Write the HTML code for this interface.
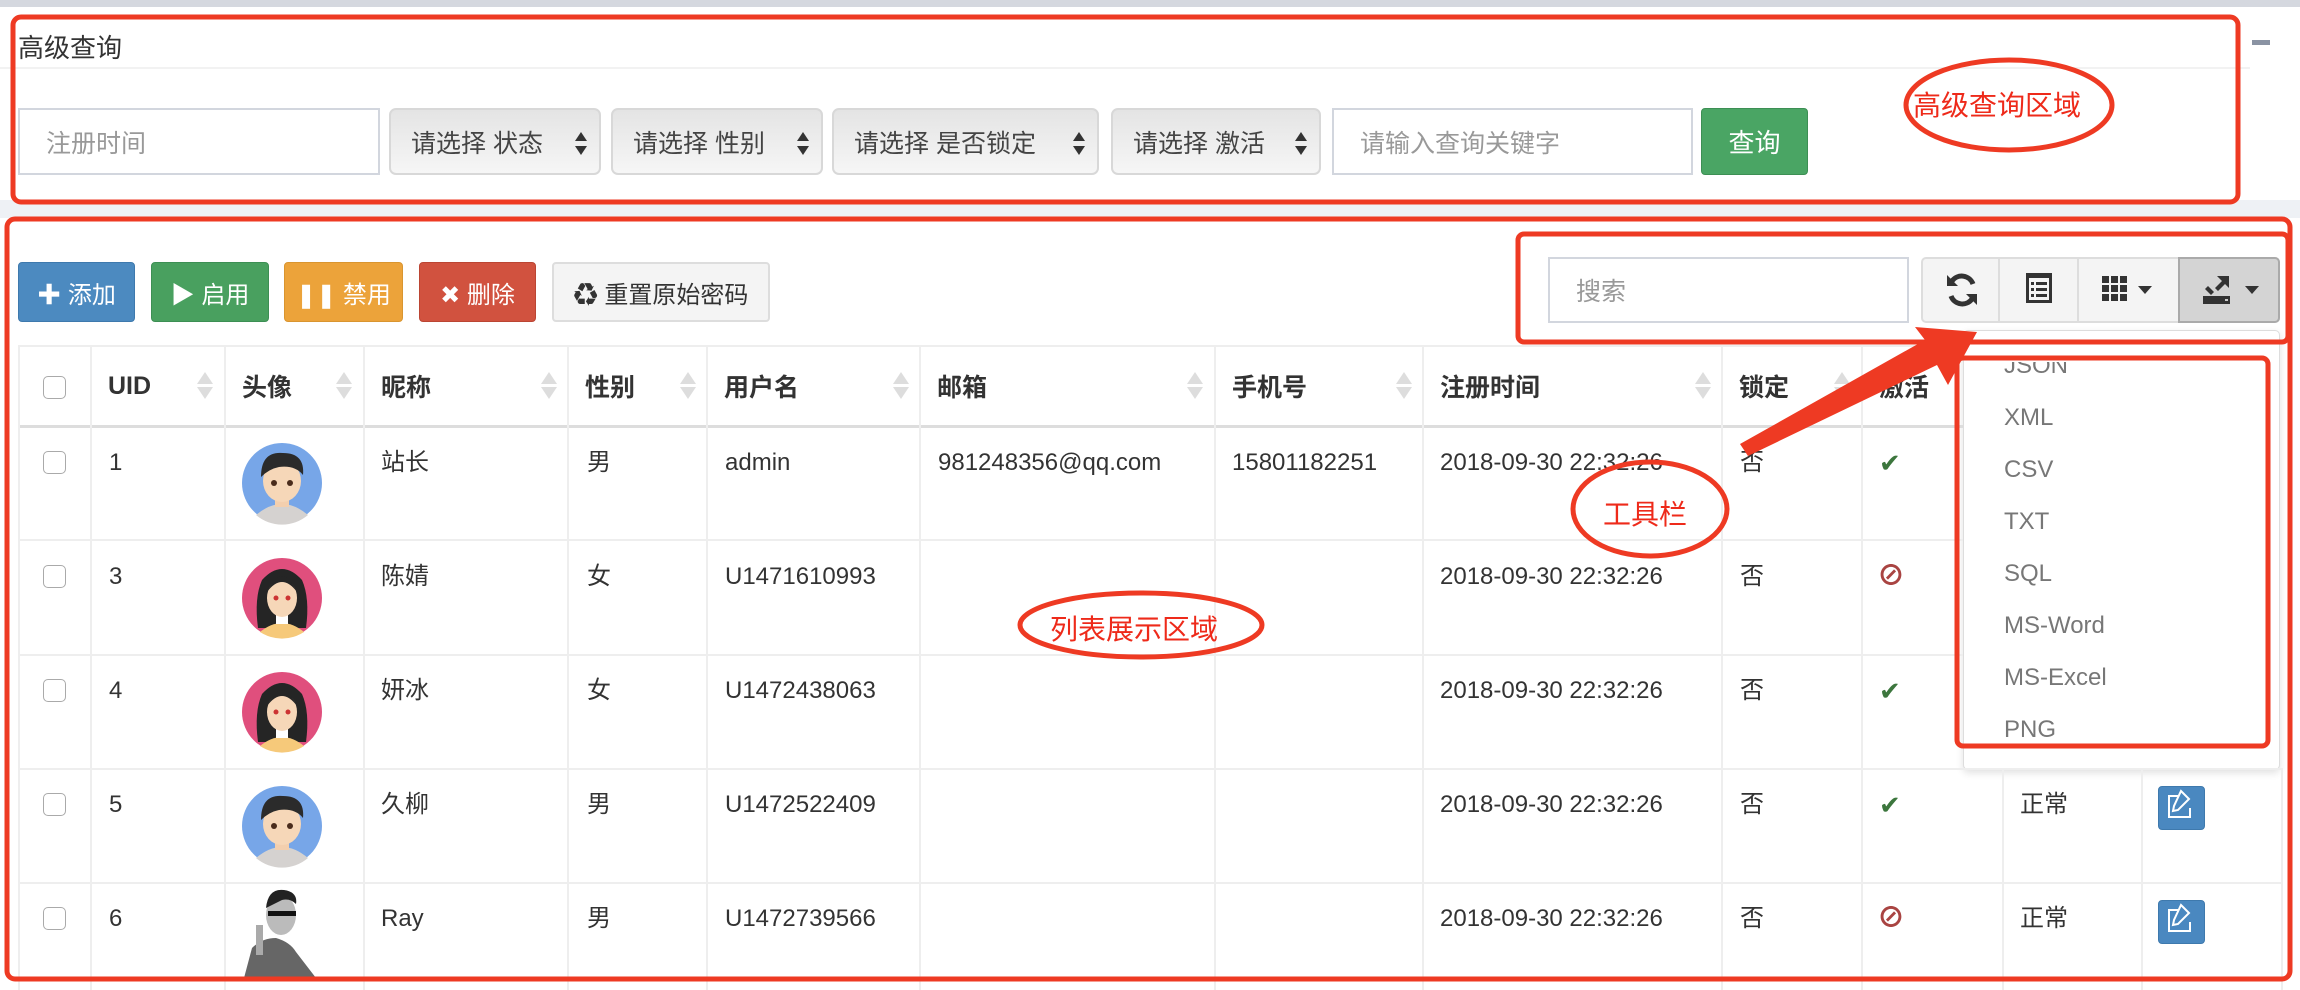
<!DOCTYPE html>
<html><head><meta charset="utf-8"><style>
*{box-sizing:border-box;margin:0;padding:0}
body{width:2300px;height:990px;position:relative;overflow:hidden;background:#fff;font-family:"Liberation Sans","Noto Sans CJK SC",sans-serif;color:#333;font-size:24px}
.a{position:absolute}
.inp{position:absolute;border:2px solid #d2d6de;background:#fff;color:#999;font-size:25px;padding-left:26px;display:flex;align-items:center}
.sel{position:absolute;border:2px solid #d8d8d8;border-radius:7px;background:linear-gradient(#e4e4e4,#f6f6f6);font-size:25px;color:#444;display:flex;align-items:center;padding-left:20px}
.sel:after{content:"";position:absolute;right:12px;top:22px;border-left:6px solid transparent;border-right:6px solid transparent;border-bottom:9px solid #333}
.sel i{position:absolute;right:12px;top:36px;border-left:6px solid transparent;border-right:6px solid transparent;border-top:9px solid #333}
.btn{position:absolute;top:262px;height:60px;border-radius:4px;color:#fff;font-size:24px;display:flex;align-items:center;justify-content:center}
.th{position:absolute;top:345px;height:82px;font-weight:bold;font-size:25px;display:flex;align-items:center;padding-left:18px;color:#333}
.vl{position:absolute;top:345px;width:2px;background:#eee}
.hl{position:absolute;left:18px;height:2px;background:#eee}
.cell{position:absolute;font-size:24px;color:#333;line-height:30px}
.cb{position:absolute;width:23px;height:23px;border:1.5px solid #aaa;border-radius:5px;background:#fff}
.sort{position:absolute;top:372px;width:0;height:0}
.sort:before{content:"";position:absolute;left:-8px;top:0;border-left:8px solid transparent;border-right:8px solid transparent;border-bottom:12px solid #ddd}
.sort:after{content:"";position:absolute;left:-8px;top:15px;border-left:8px solid transparent;border-right:8px solid transparent;border-top:12px solid #ddd}
.dd{position:absolute;left:2004px;font-size:24px;color:#777}
.edit{position:absolute;left:2158px;width:47px;height:44px;background:#4a88c0;border-radius:4px;border:1px solid #3e79ad}
.ok{position:absolute;left:1879px;font-size:26px;color:#3c763d;line-height:30px}
.no{position:absolute;left:1877px;font-size:28px;color:#a94442;font-weight:bold;line-height:30px}
</style></head><body>
<div class="a" style="left:0;top:0;width:2300px;height:7px;background:#d5d8df"></div>
<div class="a" style="left:0;top:200px;width:2300px;height:18px;background:#eef1f5"></div>
<div class="a" style="left:0;top:67px;width:2250px;height:2px;background:#f2f2f2"></div>
<div class="a" style="left:18px;top:28px;font-size:26px;color:#333">高级查询</div>
<div class="a" style="left:2252px;top:40px;width:18px;height:5px;background:#8a93a3"></div>

<div class="inp" style="left:18px;top:108px;width:362px;height:67px">注册时间</div>
<div class="sel" style="left:389px;top:108px;width:212px;height:67px">请选择 状态<i></i></div>
<div class="sel" style="left:611px;top:108px;width:212px;height:67px">请选择 性别<i></i></div>
<div class="sel" style="left:832px;top:108px;width:267px;height:67px">请选择 是否锁定<i></i></div>
<div class="sel" style="left:1111px;top:108px;width:210px;height:67px">请选择 激活<i></i></div>
<div class="inp" style="left:1332px;top:108px;width:361px;height:67px">请输入查询关键字</div>
<div class="a" style="left:1701px;top:108px;width:107px;height:67px;background:#4aa564;border-radius:4px;border:1px solid #3d8f54;color:#fff;font-size:26px;display:flex;align-items:center;justify-content:center">查询</div>

<div class="btn" style="left:18px;width:117px;background:#4c8ac0;border:1px solid #3e79ad">✚ 添加</div>
<div class="btn" style="left:151px;width:118px;background:#49a05f;border:1px solid #3d8f54">▶ 启用</div>
<div class="btn" style="left:284px;width:119px;background:#eca33a;border:1px solid #d99530">❚❚ 禁用</div>
<div class="btn" style="left:419px;width:117px;background:#d1523f;border:1px solid #bb4533">✖ 删除</div>
<div class="btn" style="left:552px;width:218px;background:#f4f4f4;border:2px solid #ddd;color:#333">♻ 重置原始密码</div>

<div class="inp" style="left:1548px;top:257px;width:361px;height:66px">搜索</div>
<div class="a" style="left:1921px;top:257px;width:359px;height:66px;border:2px solid #ddd;border-radius:5px;background:#f4f4f4"></div>
<div class="a" style="left:1998px;top:259px;width:2px;height:62px;background:#ddd"></div>
<div class="a" style="left:2077px;top:259px;width:2px;height:62px;background:#ddd"></div>
<div class="a" style="left:2178px;top:257px;width:102px;height:66px;background:#d4d4d4;border:2px solid #aaa;border-radius:0 5px 5px 0"></div>
<svg class="a" style="left:1945px;top:272px" width="34" height="36" viewBox="0 0 34 36"><path d="M28 12A12 12 0 0 0 7 9M6 24A12 12 0 0 0 27 27" stroke="#333" stroke-width="5" fill="none"/><path d="M2 3v11h11z" fill="#333"/><path d="M32 33V22H21z" fill="#333"/></svg>
<svg class="a" style="left:2026px;top:273px" width="26" height="30"><rect x="1.5" y="1.5" width="23" height="27" fill="none" stroke="#333" stroke-width="3"/><rect x="0" y="0" width="26" height="5" fill="#333"/><g fill="#333"><rect x="5" y="9" width="3" height="3"/><rect x="10" y="9" width="11" height="3"/><rect x="5" y="15" width="3" height="3"/><rect x="10" y="15" width="11" height="3"/><rect x="5" y="21" width="3" height="3"/><rect x="10" y="21" width="11" height="3"/></g></svg>
<svg class="a" style="left:2102px;top:276px" width="54" height="26"><g fill="#333"><rect x="0" y="0" width="7" height="7"/><rect x="9" y="0" width="7" height="7"/><rect x="18" y="0" width="7" height="7"/><rect x="0" y="9" width="7" height="7"/><rect x="9" y="9" width="7" height="7"/><rect x="18" y="9" width="7" height="7"/><rect x="0" y="18" width="7" height="7"/><rect x="9" y="18" width="7" height="7"/><rect x="18" y="18" width="7" height="7"/><path d="M36 10h14l-7 8z"/></g></svg>
<svg class="a" style="left:2203px;top:274px" width="56" height="30"><g fill="#333"><rect x="0" y="22" width="27" height="8"/><path d="M14 2h12v12l-4-4-7 7-3-3 7-7z"/><path d="M5 12l6 6-3 3-6-6z"/><path d="M42 12h14l-7 8z"/></g><rect x="22" y="25" width="3" height="2" fill="#ccc"/></svg>

<div class="a" style="left:1963px;top:330px;width:317px;height:440px;background:#fff;border:1px solid #ddd;border-radius:5px;box-shadow:0 3px 8px rgba(0,0,0,.12)"></div>

<div class="hl" style="top:345px;width:1945px"></div>
<div class="hl" style="top:425px;width:1945px;height:3px;background:#ddd"></div>
<div class="hl" style="top:539px;width:1945px"></div>
<div class="hl" style="top:654px;width:1945px"></div>
<div class="hl" style="top:768px;width:2265px"></div>
<div class="hl" style="top:882px;width:2265px"></div>
<div class="vl" style="left:18px;height:645px"></div>
<div class="vl" style="left:90px;height:645px"></div>
<div class="vl" style="left:224px;height:645px"></div>
<div class="vl" style="left:363px;height:645px"></div>
<div class="vl" style="left:567px;height:645px"></div>
<div class="vl" style="left:706px;height:645px"></div>
<div class="vl" style="left:919px;height:645px"></div>
<div class="vl" style="left:1214px;height:645px"></div>
<div class="vl" style="left:1422px;height:645px"></div>
<div class="vl" style="left:1721px;height:645px"></div>
<div class="vl" style="left:1861px;height:645px"></div>
<div class="vl" style="left:2002px;top:768px;height:222px"></div>
<div class="vl" style="left:2141px;top:768px;height:222px"></div>
<div class="vl" style="left:2281px;top:768px;height:222px"></div>

<div class="cb" style="left:43px;top:376px"></div>
<div class="th" style="left:90px">UID</div><div class="sort" style="left:205px"></div>
<div class="th" style="left:224px">头像</div><div class="sort" style="left:344px"></div>
<div class="th" style="left:363px">昵称</div><div class="sort" style="left:549px"></div>
<div class="th" style="left:567px">性别</div><div class="sort" style="left:688px"></div>
<div class="th" style="left:706px">用户名</div><div class="sort" style="left:901px"></div>
<div class="th" style="left:919px">邮箱</div><div class="sort" style="left:1195px"></div>
<div class="th" style="left:1214px">手机号</div><div class="sort" style="left:1404px"></div>
<div class="th" style="left:1422px">注册时间</div><div class="sort" style="left:1703px"></div>
<div class="th" style="left:1721px">锁定</div><div class="sort" style="left:1842px"></div>
<div class="th" style="left:1861px">激活</div>

<div class="cb" style="left:43px;top:451px"></div><div class="cell" style="left:109px;top:448px">1</div><div class="cell" style="left:381px;top:448px">站长</div><div class="cell" style="left:587px;top:448px">男</div><div class="cell" style="left:725px;top:448px">admin</div><div class="cell" style="left:938px;top:448px">981248356@qq.com</div><div class="cell" style="left:1232px;top:448px">15801182251</div><div class="cell" style="left:1440px;top:448px">2018-09-30 22:32:26</div><div class="cell" style="left:1740px;top:448px">否</div><div class="ok" style="top:448px">✔</div>
<div class="cb" style="left:43px;top:565px"></div><div class="cell" style="left:109px;top:562px">3</div><div class="cell" style="left:381px;top:562px">陈婧</div><div class="cell" style="left:587px;top:562px">女</div><div class="cell" style="left:725px;top:562px">U1471610993</div><div class="cell" style="left:1440px;top:562px">2018-09-30 22:32:26</div><div class="cell" style="left:1740px;top:562px">否</div><div class="no" style="top:561px">⊘</div>
<div class="cb" style="left:43px;top:679px"></div><div class="cell" style="left:109px;top:676px">4</div><div class="cell" style="left:381px;top:676px">妍冰</div><div class="cell" style="left:587px;top:676px">女</div><div class="cell" style="left:725px;top:676px">U1472438063</div><div class="cell" style="left:1440px;top:676px">2018-09-30 22:32:26</div><div class="cell" style="left:1740px;top:676px">否</div><div class="ok" style="top:676px">✔</div>
<div class="cb" style="left:43px;top:793px"></div><div class="cell" style="left:109px;top:790px">5</div><div class="cell" style="left:381px;top:790px">久柳</div><div class="cell" style="left:587px;top:790px">男</div><div class="cell" style="left:725px;top:790px">U1472522409</div><div class="cell" style="left:1440px;top:790px">2018-09-30 22:32:26</div><div class="cell" style="left:1740px;top:790px">否</div><div class="ok" style="top:790px">✔</div><div class="cell" style="left:2020px;top:790px">正常</div><div class="edit" style="top:786px"></div>
<div class="cb" style="left:43px;top:907px"></div><div class="cell" style="left:109px;top:904px">6</div><div class="cell" style="left:381px;top:904px">Ray</div><div class="cell" style="left:587px;top:904px">男</div><div class="cell" style="left:725px;top:904px">U1472739566</div><div class="cell" style="left:1440px;top:904px">2018-09-30 22:32:26</div><div class="cell" style="left:1740px;top:904px">否</div><div class="no" style="top:903px">⊘</div><div class="cell" style="left:2020px;top:904px">正常</div><div class="edit" style="top:900px"></div>

<svg class="a" style="left:0;top:0" width="2300" height="990">
<defs>
<g id="boy"><circle cx="40" cy="40" r="40" fill="#77a6e8"/><path d="M14 72q26-22 52 0a40 40 0 0 1-52 0z" fill="#d5d2d0"/><rect x="33" y="48" width="14" height="16" fill="#f3cfae"/><ellipse cx="40" cy="38" rx="19" ry="21" fill="#f6d7b8"/><path d="M19 34q0-26 22-24q22 0 20 22q-8-10-24-8q-10 2-18 10z" fill="#2b2b2b"/><circle cx="32" cy="40" r="3" fill="#4a2c1c"/><circle cx="48" cy="40" r="3" fill="#4a2c1c"/></g>
<g id="girl"><circle cx="40" cy="40" r="40" fill="#e04f7d"/><path d="M16 70q-4-30 4-48q20-22 40 0q8 18 4 48z" fill="#252525"/><path d="M18 74q22-18 44 0a40 40 0 0 1-44 0z" fill="#f6c97a"/><rect x="34" y="52" width="12" height="14" fill="#fff"/><ellipse cx="40" cy="40" rx="15" ry="19" fill="#f6d7b8"/><path d="M25 34q15-20 30 0q-8-16-15-16t-15 16z" fill="#252525"/><circle cx="34" cy="40" r="2.5" fill="#c33"/><circle cx="46" cy="40" r="2.5" fill="#c33"/></g>
</defs>
<use href="#boy" x="242" y="443"/>
<use href="#girl" x="242" y="558"/>
<use href="#girl" x="242" y="672"/>
<use href="#boy" x="242" y="786"/>
<g><path d="M244 978l8-30q10-10 24-10q14 4 20 14l20 26z" fill="#666"/><ellipse cx="281" cy="915" rx="15" ry="20" fill="#bbb"/><path d="M266 908q2-20 18-18q14 2 12 14q-6-6-14-4z" fill="#222"/><rect x="268" y="911" width="28" height="5" fill="#111"/><rect x="256" y="925" width="7" height="30" fill="#aaa"/></g>
<path d="M2178 796h-9v21h21v-9M2181 791l8 8-11 11-5 1 1-5z" stroke="#fff" stroke-width="2" fill="none"/>
<path d="M2178 910h-9v21h21v-9M2181 905l8 8-11 11-5 1 1-5z" stroke="#fff" stroke-width="2" fill="none"/>
<g fill="none" stroke="#ee3a23" stroke-width="5">
<rect x="13" y="17" width="2225" height="185" rx="8"/>
<rect x="7" y="219" width="2283" height="760" rx="8"/>
<rect x="1518" y="234" width="770" height="108" rx="6"/>
<rect x="1957" y="358" width="311" height="388" rx="6"/>
<ellipse cx="2009" cy="105" rx="103" ry="45"/>
<ellipse cx="1650" cy="509" rx="77" ry="47"/>
<ellipse cx="1141" cy="625" rx="121" ry="32"/>
</g>
<path d="M1740 444L1925 340L1915 327L1977 332L1948 385L1937 365L1748 456z" fill="#ee3a23"/>
</svg>
<div class="a" style="left:1913px;top:84px;font-size:28px;color:#ee2a1a">高级查询区域</div>
<div class="a" style="left:1603px;top:493px;font-size:28px;color:#ee2a1a">工具栏</div>
<div class="a" style="left:1050px;top:608px;font-size:28px;color:#ee2a1a">列表展示区域</div>

<div class="dd" style="left:2004px;top:352px;clip-path:inset(10px 0 0 0)">JSON</div>
<div class="dd" style="top:404px">XML</div>
<div class="dd" style="top:456px">CSV</div>
<div class="dd" style="top:508px">TXT</div>
<div class="dd" style="top:560px">SQL</div>
<div class="dd" style="top:612px">MS-Word</div>
<div class="dd" style="top:664px">MS-Excel</div>
<div class="dd" style="top:716px">PNG</div>
</body></html>
